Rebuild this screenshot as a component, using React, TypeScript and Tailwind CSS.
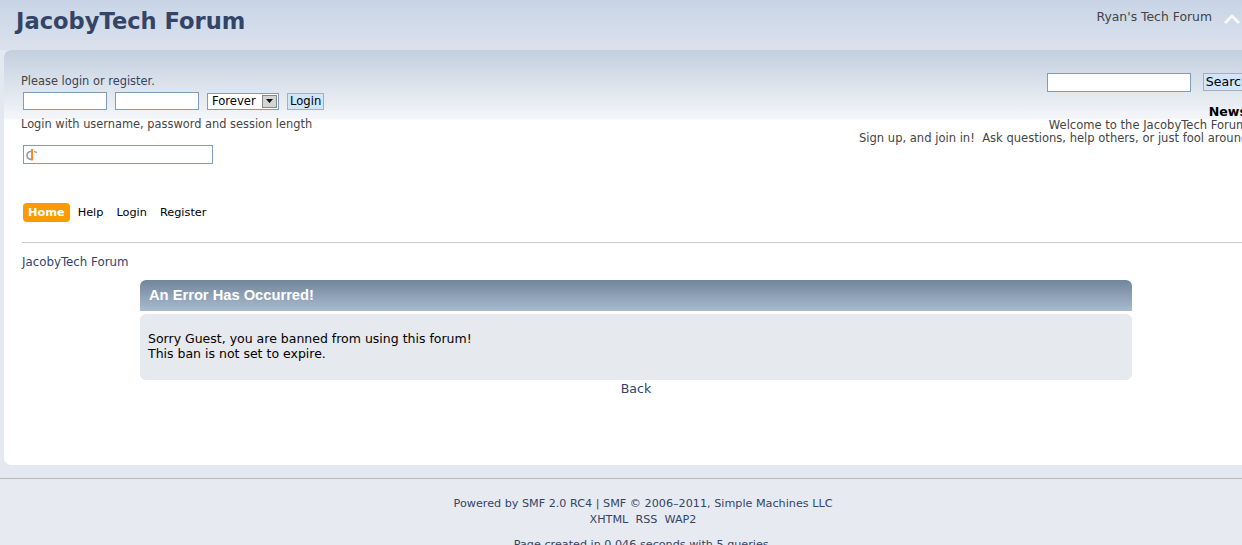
import { useState } from "react";

const OpenIdIcon = () => (
	<svg width="12" height="13" viewBox="0 0 12 13" className="shrink-0">
		<path d="M5 3.2 C2.2 3.8 1 5.6 1 7.4 C1 9.4 2.6 11 5 11.4" fill="none" stroke="#9a9a9a" strokeWidth="1.6" />
		<rect x="5" y="1" width="2" height="11.5" fill="#f78c1e" />
		<path d="M8.2 3.4 L11 4.6" fill="none" stroke="#9a9a9a" strokeWidth="1.3" />
	</svg>
);

const Header = () => (
	<div className="h-[50px] bg-[linear-gradient(to_bottom,#c8d4e5,#dbe2ed)] flex justify-between pr-[44px]">
		<h1 className="pl-[16px] pt-[8px] text-[22.6px] leading-[26px] font-bold text-[#334466]">
			JacobyTech Forum
		</h1>
		<div className="flex items-start pt-[10px]">
			<span className="text-[12.4px] leading-[14px] text-[#444]">Ryan's Tech Forum</span>
			<svg width="20" height="14" viewBox="0 0 20 14" className="ml-[10px] mt-[2px]">
				<polyline points="3,11 10,4 17,11" fill="none" stroke="#ffffff" strokeOpacity="0.8" strokeWidth="3" />
			</svg>
		</div>
	</div>
);

const LoginBox = () => {
	const [user, setUser] = useState("");
	const [pass, setPass] = useState("");
	return (
		<div className="text-[11.4px] text-[#444]">
			<div className="leading-[14px] pt-[1px]">
				Please <span className="text-[#334466]">login</span> or{" "}
				<span className="text-[#334466]">register</span>.
			</div>
			<div className="flex items-center mt-[4px] h-[18px]">
				<input
					value={user}
					onChange={(e) => setUser(e.target.value)}
					className="ml-[2px] w-[84px] h-[18px] bg-white border border-[#7f9db9] outline-none"
				/>
				<input
					type="password"
					value={pass}
					onChange={(e) => setPass(e.target.value)}
					className="ml-[8px] w-[84px] h-[18px] bg-white border border-[#7f9db9] outline-none"
				/>
				<div className="ml-[8px] w-[72px] h-[17px] bg-white border border-[#7f9db9] flex items-center justify-between text-[11.6px] text-black">
					<span className="pl-[4px] leading-[14px]">Forever</span>
					<span className="w-[15px] h-[13px] mr-[1px] bg-[#d4d4d4] border border-[#888] flex items-center justify-center">
						<svg width="7" height="4" viewBox="0 0 7 4">
							<polygon points="0,0 7,0 3.5,4" fill="#111" />
						</svg>
					</span>
				</div>
				<div className="ml-[8px] h-[17px] px-[2px] bg-[#cfe6fc] border border-[#a9aeb4] text-black leading-[15px] text-[11.6px]">
					Login
				</div>
			</div>
			<div className="mt-[7px] leading-[14px]">Login with username, password and session length</div>
			<div className="mt-[14px] ml-[2px] w-[190px] h-[19px] bg-white border border-[#7f9db9] flex items-center pl-[2px]">
				<OpenIdIcon />
			</div>
		</div>
	);
};

const NewsBox = () => (
	<div className="flex flex-col items-end text-[11.55px] text-[#444]">
		<div className="flex items-center h-[18px]">
			<div className="w-[144px] h-[19px] bg-white border border-[#7f9db9]" />
			<div className="ml-[12px] h-[18px] px-[2px] bg-[#cfe6fc] border border-[#a9aeb4] text-black leading-[16px] text-[12.6px]">
				Search
			</div>
		</div>
		<div className="mt-[14px] font-bold text-black text-[12.6px] leading-[14px]">News:</div>
		<div className="leading-[13px]">Welcome to the JacobyTech Forum!</div>
		<div className="leading-[13px] whitespace-pre">
			Sign up, and join in!  Ask questions, help others, or just fool around.
		</div>
	</div>
);

const NavMenu = () => (
	<div className="flex items-center text-[11.3px] text-black">
		<div className="h-[19px] px-[5px] rounded-[4px] bg-[#fb9a03] text-white font-bold leading-[19px]">
			Home
		</div>
		<div className="ml-[8px] leading-[19px]">Help</div>
		<div className="ml-[13px] leading-[19px]">Login</div>
		<div className="ml-[13px] leading-[19px]">Register</div>
	</div>
);

const ErrorBox = () => (
	<div className="ml-[118px] w-[992px]">
		<div className="h-[31px] rounded-t-[6px] bg-[linear-gradient(to_bottom,#71859b,#a9bbcf)] pl-[9px] flex items-center">
			<h3 className="font-['Liberation_Sans',Arial,sans-serif] font-bold text-[14.7px] text-white">
				An Error Has Occurred!
			</h3>
		</div>
		<div className="mt-[3px] h-[66px] rounded-[6px] bg-[#e6e9ee] pl-[8px] pt-[17px] text-[12.5px] leading-[15px] text-black">
			<div>Sorry Guest, you are banned from using this forum!</div>
			<div>This ban is not set to expire.</div>
		</div>
		<div className="mt-[1px] text-center text-[12.6px] leading-[15px] text-[#334466]">Back</div>
	</div>
);

export default function App() {
	return (
		<div className="w-[1242px] h-[545px] overflow-hidden bg-[#e4e9f1] font-['DejaVu_Sans',Verdana,sans-serif]">
			<div className="w-[1286px]">
				<Header />
				<div className="ml-[4px] w-[1264px] h-[415px] rounded-[7px] bg-white overflow-hidden">
					<div className="bg-[linear-gradient(to_bottom,#c3cfdf_0px,#f4f6f9_69px,#ffffff_70px)] pl-[17px] pr-[16px] pt-[23px] flex justify-between">
						<LoginBox />
						<NewsBox />
					</div>
					<div className="px-[18px]">
						<div className="mt-[39px] pl-[1px]">
							<NavMenu />
						</div>
						<div className="mt-[20px] border-t border-[#cccccc]" />
						<div className="mt-[12px] text-[11.8px] leading-[14px] text-[#334466]">JacobyTech Forum</div>
						<div className="mt-[11px]">
							<ErrorBox />
						</div>
					</div>
				</div>
				<div className="mt-[13px] border-t border-[#b9b9b9] bg-[#e7ebf1] h-[80px] text-center text-[11.2px] leading-[16px] text-[#334466]">
					<div className="pt-[17px]">Powered by SMF 2.0 RC4 | SMF © 2006–2011, Simple Machines LLC</div>
					<div className="whitespace-pre">XHTML  RSS  WAP2</div>
					<div className="mt-[9px]">Page created in 0.046 seconds with 5 queries.</div>
				</div>
			</div>
		</div>
	);
}
